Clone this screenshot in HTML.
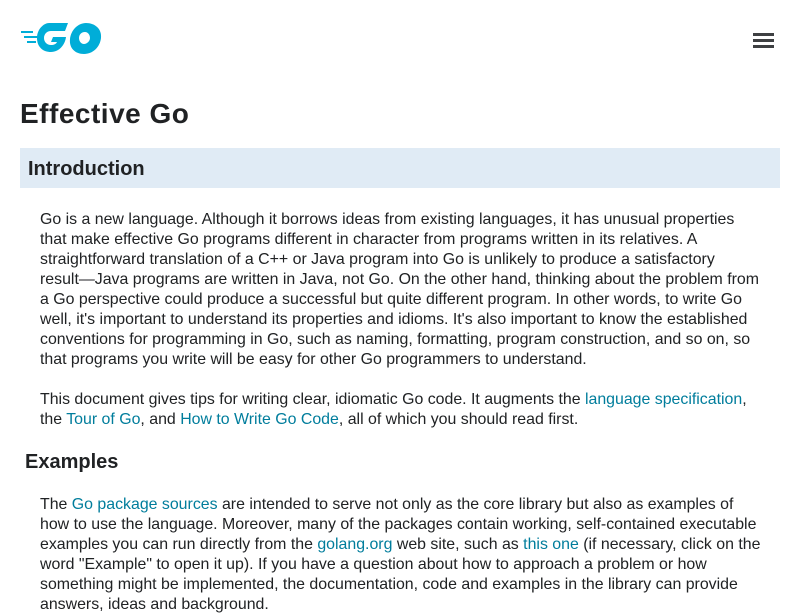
<!DOCTYPE html>
<html><head><meta charset="utf-8"><style>
body{margin:0;background:#fff;font-family:"Liberation Sans",sans-serif;color:#202224;overflow:hidden;}
.logo{position:absolute;left:20px;top:22px;}
.menu{position:absolute;left:753px;top:33px;width:21px;}
.menu div{height:3px;background:#3e4042;margin-bottom:3px;}
h1{position:absolute;left:20px;top:98px;margin:0;font-size:28px;font-weight:bold;letter-spacing:0.5px;}
.h2{position:absolute;left:20px;top:148px;width:760px;height:40px;background:#e0ebf5;}
.h2 span{position:absolute;left:8px;top:10px;font-size:20px;font-weight:bold;}
.p{position:absolute;left:40px;font-size:15.9px;line-height:20px;white-space:nowrap;}
a{color:#007d9c;text-decoration:none;}
h3{position:absolute;left:25px;top:451px;margin:0;font-size:20px;font-weight:bold;}
</style></head><body>
<svg class="logo" width="84" height="32" viewBox="0 0 82 32">
<g fill="#00add8">
<rect x="0" y="9" width="12" height="2"/>
<rect x="3" y="14" width="14" height="2"/>
<rect x="6" y="19" width="9" height="2"/>
<path d="M28 1h19l-3 8h-14c-4 0-7 3-7 7s3 7 7 7c3 0 5-1 6-3h-6l2-5h13c-1 8-7 15-15 15c-8 0-14-5-14-14s7-15 12-15z"/>
<path d="M65 1c9 0 16 6 15 15s-8 16-17 16s-15-6-14-15s8-16 16-16zm-1 9c-4 0-6 3-6 6s2 6 5 6s6-3 6-6s-2-6-5-6z"/>
</g></svg>
<div class="menu"><div></div><div></div><div></div></div>
<h1>Effective Go</h1>
<div class="h2"><span>Introduction</span></div>
<div class="p" style="top:210px">Go is a new language. Although it borrows ideas from existing languages, it has unusual properties<br>that make effective Go programs different in character from programs written in its relatives. A<br>straightforward translation of a C++ or Java program into Go is unlikely to produce a satisfactory<br>result—Java programs are written in Java, not Go. On the other hand, thinking about the problem from<br>a Go perspective could produce a successful but quite different program. In other words, to write Go<br>well, it's important to understand its properties and idioms. It's also important to know the established<br>conventions for programming in Go, such as naming, formatting, program construction, and so on, so<br>that programs you write will be easy for other Go programmers to understand.</div>
<div class="p" style="top:390px">This document gives tips for writing clear, idiomatic Go code. It augments the <a>language specification</a>,<br>the <a>Tour of Go</a>, and <a>How to Write Go Code</a>, all of which you should read first.</div>
<h3>Examples</h3>
<div class="p" style="top:495px">The <a>Go package sources</a> are intended to serve not only as the core library but also as examples of<br>how to use the language. Moreover, many of the packages contain working, self-contained executable<br>examples you can run directly from the <a>golang.org</a> web site, such as <a>this one</a> (if necessary, click on the<br>word "Example" to open it up). If you have a question about how to approach a problem or how<br>something might be implemented, the documentation, code and examples in the library can provide<br>answers, ideas and background.</div>
</body></html>
